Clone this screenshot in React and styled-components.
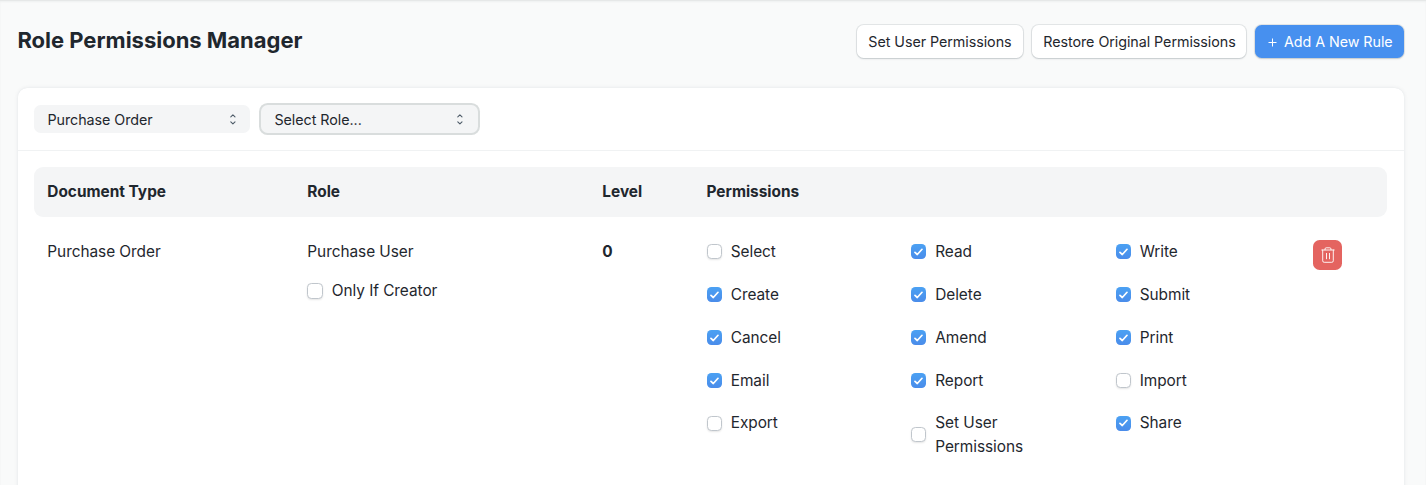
import React from "react";
import styled, { createGlobalStyle, css } from "styled-components";

const GlobalStyle = createGlobalStyle`
  *, *::before, *::after { box-sizing: border-box; }
  html, body { margin: 0; height: 485px; overflow: hidden; }
  body {
    background: #f9fafa;
    color: #1f272e;
    font-family: Inter, "Liberation Sans", sans-serif;
    font-size: 15.4px;
    line-height: 24px;
    letter-spacing: -0.04px;
  }
`;

const Page = styled.main`
  height: 485px;
  overflow: hidden;
  padding: 0 22px 0 18px;
  box-shadow: inset 0 1px 0 #e6e8e8, inset 0 2px 2px #eef0f0;
`;

const PageHead = styled.header`
  display: flex;
  align-items: center;
  justify-content: space-between;
  height: 83px;
`;

const Title = styled.h1`
  margin: 0 0 3px -0.6px;
  font-size: 22px;
  line-height: 30px;
  font-weight: 700;
  letter-spacing: -0.01px;
`;

const Actions = styled.div`
  display: flex;
  gap: 9px;
`;

const Button = styled.button`
  display: flex;
  align-items: center;
  width: ${(p) => p.$width}px;
  height: 33px;
  padding: 0 11px 0 11.3px;
  border: 0;
  border-radius: 6.6px;
  font: 400 14.3px/22px Inter, "Liberation Sans", sans-serif;
  letter-spacing: -0.05px;
  white-space: nowrap;
  box-shadow: 0 0 0 1px rgba(25, 39, 52, 0.09), 0 1px 2px rgba(25, 39, 52, 0.15);
  color: ${(p) => (p.$primary ? "#fff" : "#1f272e")};
  background: ${(p) => (p.$primary ? "#4790ef" : "#fff")};
  svg { margin: 1px 7px 0 1.7px; }
`;

const Card = styled.section`
  height: 430px;
  margin-top: 5px;
  background: #fff;
  border-radius: 9px;
  box-shadow: 0 0 1px rgba(17, 43, 66, 0.08), 0 0 4px rgba(17, 43, 66, 0.08);
`;

const Filters = styled.div`
  display: flex;
  align-items: center;
  gap: 11px;
  height: 63px;
  padding: 0 16px;
  border-bottom: 1px solid #f0f2f3;
`;

const SelectBox = styled.div`
  display: flex;
  align-items: center;
  justify-content: space-between;
  width: ${(p) => p.$width}px;
  height: 28px;
  padding: 0 ${(p) => (p.$focused ? 14 : 13)}px 0 13.4px;
  border-radius: 6.6px;
  background: #f4f5f6;
  color: #1f272e;
  font-size: 14.3px;
  ${(p) => p.$focused && css`box-shadow: 0 0 0 2px #d9dddd;`}
`;

const SelectValue = styled.span`
  padding-top: 2px;
`;

const TableHead = styled.div`
  display: grid;
  grid-template-columns: 260px 295px 104.2px 1fr;
  align-items: center;
  height: 50px;
  margin: 16px 17px 0 16px;
  padding-left: 13.3px;
  border-radius: 9px;
  background: #f4f5f6;
  font-weight: 700;
  letter-spacing: 0;
`;

const TableRow = styled.div`
  display: grid;
  grid-template-columns: 260px 295px 104.4px 613.8px 1fr;
  align-items: start;
  margin: 0 17px 0 16px;
  padding: 22.95px 0 0 13.3px;
`;

const Level = styled.div`
  font-weight: 700;
`;

const Creator = styled.div`
  margin-top: 15px;
`;

const PermissionGrid = styled.div`
  display: grid;
  grid-template-columns: repeat(3, 204.5px);
  row-gap: 18.87px;
`;

const CheckLabel = styled.label`
  display: flex;
  align-items: center;
`;

const CheckBox = styled.span`
  flex: none;
  display: flex;
  align-items: center;
  justify-content: center;
  width: ${(p) => (p.$large ? 16 : 15)}px;
  height: ${(p) => (p.$large ? 16 : 15)}px;
  margin-right: ${(p) => (p.$large ? 8.4 : 9)}px;
  margin-bottom: ${(p) => (p.$multiline ? 1.2 : 0)}px;
  border-radius: 4.4px;
  ${(p) =>
    p.$checked
      ? css`background: linear-gradient(180deg, #4ba1f3, #4a8cea);`
      : css`
          background: #fff;
          border: 1px solid #c0c6cc;
          box-shadow: 0 1px 2px rgba(0, 0, 0, 0.1);
        `}
`;

const DeleteButton = styled.button`
  display: flex;
  align-items: center;
  justify-content: center;
  width: 29px;
  height: 30px;
  margin: 0 0 0 -7.5px;
  padding: 0 0 0 1px;
  border: 0;
  border-radius: 6.6px;
  background: #e46460;
`;

function PlusIcon() {
  return (
    <svg width="9" height="9" viewBox="0 0 9 9" fill="none" stroke="#fff">
      <path d="M4.5 0.5v8M0.5 4.5h8" />
    </svg>
  );
}

function SortIcon() {
  return (
    <svg width="8" height="12" viewBox="0 0 8 12" fill="none" stroke="#4c5a67" strokeWidth="1.1" strokeLinecap="round" strokeLinejoin="round">
      <path d="M1.8 3.9L3.9 1.9l2.1 2M1.8 8.9l2.1 2 2.1-2" />
    </svg>
  );
}

function CheckIcon() {
  return (
    <svg width="9" height="8" viewBox="0 0 9 8" fill="none" stroke="#fff" strokeWidth="1.7" strokeLinecap="round" strokeLinejoin="round">
      <path d="M1 4.4l2.3 2.1L8 1.3" />
    </svg>
  );
}

function TrashIcon() {
  return (
    <svg width="14" height="16" viewBox="0 0 14 16" fill="none" stroke="#fff" strokeOpacity="0.9" strokeLinecap="round" strokeLinejoin="round">
      <path d="M0.8 3h12.4M1.7 3v10.8a1.5 1.5 0 0 0 1.5 1.5h7.6a1.5 1.5 0 0 0 1.5-1.5V3M4 2.8V2a1.2 1.2 0 0 1 1.2-1.2h3.6A1.2 1.2 0 0 1 10 2v.8M5.5 6.4v5.4M8.5 6.4v5.4" />
    </svg>
  );
}

function Check({ label, checked, large, multiline }) {
  return (
    <CheckLabel>
      <CheckBox $checked={checked} $large={large} $multiline={multiline}>
        {checked && <CheckIcon />}
      </CheckBox>
      <span>{label}</span>
    </CheckLabel>
  );
}

const permissions = [
  ["Select", false],
  ["Read", true],
  ["Write", true],
  ["Create", true],
  ["Delete", true],
  ["Submit", true],
  ["Cancel", true],
  ["Amend", true],
  ["Print", true],
  ["Email", true],
  ["Report", true],
  ["Import", false],
  ["Export", false],
  ["Set User Permissions", false],
  ["Share", true],
];

const PermissionItem = styled.div`
  max-width: 136px;
`;

export default function App() {
  return (
    <>
      <GlobalStyle />
      <Page>
        <PageHead>
          <Title>Role Permissions Manager</Title>
          <Actions>
            <Button $width={166}>Set User Permissions</Button>
            <Button $width={214}>Restore Original Permissions</Button>
            <Button $width={149} $primary>
              <PlusIcon />
              Add A New Rule
            </Button>
          </Actions>
        </PageHead>
        <Card>
          <Filters>
            <SelectBox $width={216}>
              <SelectValue>Purchase Order</SelectValue>
              <SortIcon />
            </SelectBox>
            <SelectBox $width={217} $focused>
              <SelectValue>Select Role...</SelectValue>
              <SortIcon />
            </SelectBox>
          </Filters>
          <TableHead>
            <span>Document Type</span>
            <span>Role</span>
            <span>Level</span>
            <span>Permissions</span>
          </TableHead>
          <TableRow>
            <div>Purchase Order</div>
            <div>
              <div>Purchase User</div>
              <Creator>
                <Check label="Only If Creator" large />
              </Creator>
            </div>
            <Level>0</Level>
            <PermissionGrid>
              {permissions.map(([label, checked]) => (
                <PermissionItem key={label}>
                  <Check label={label} checked={checked} multiline={label.length > 15} />
                </PermissionItem>
              ))}
            </PermissionGrid>
            <DeleteButton aria-label="Delete rule">
              <TrashIcon />
            </DeleteButton>
          </TableRow>
        </Card>
      </Page>
    </>
  );
}
